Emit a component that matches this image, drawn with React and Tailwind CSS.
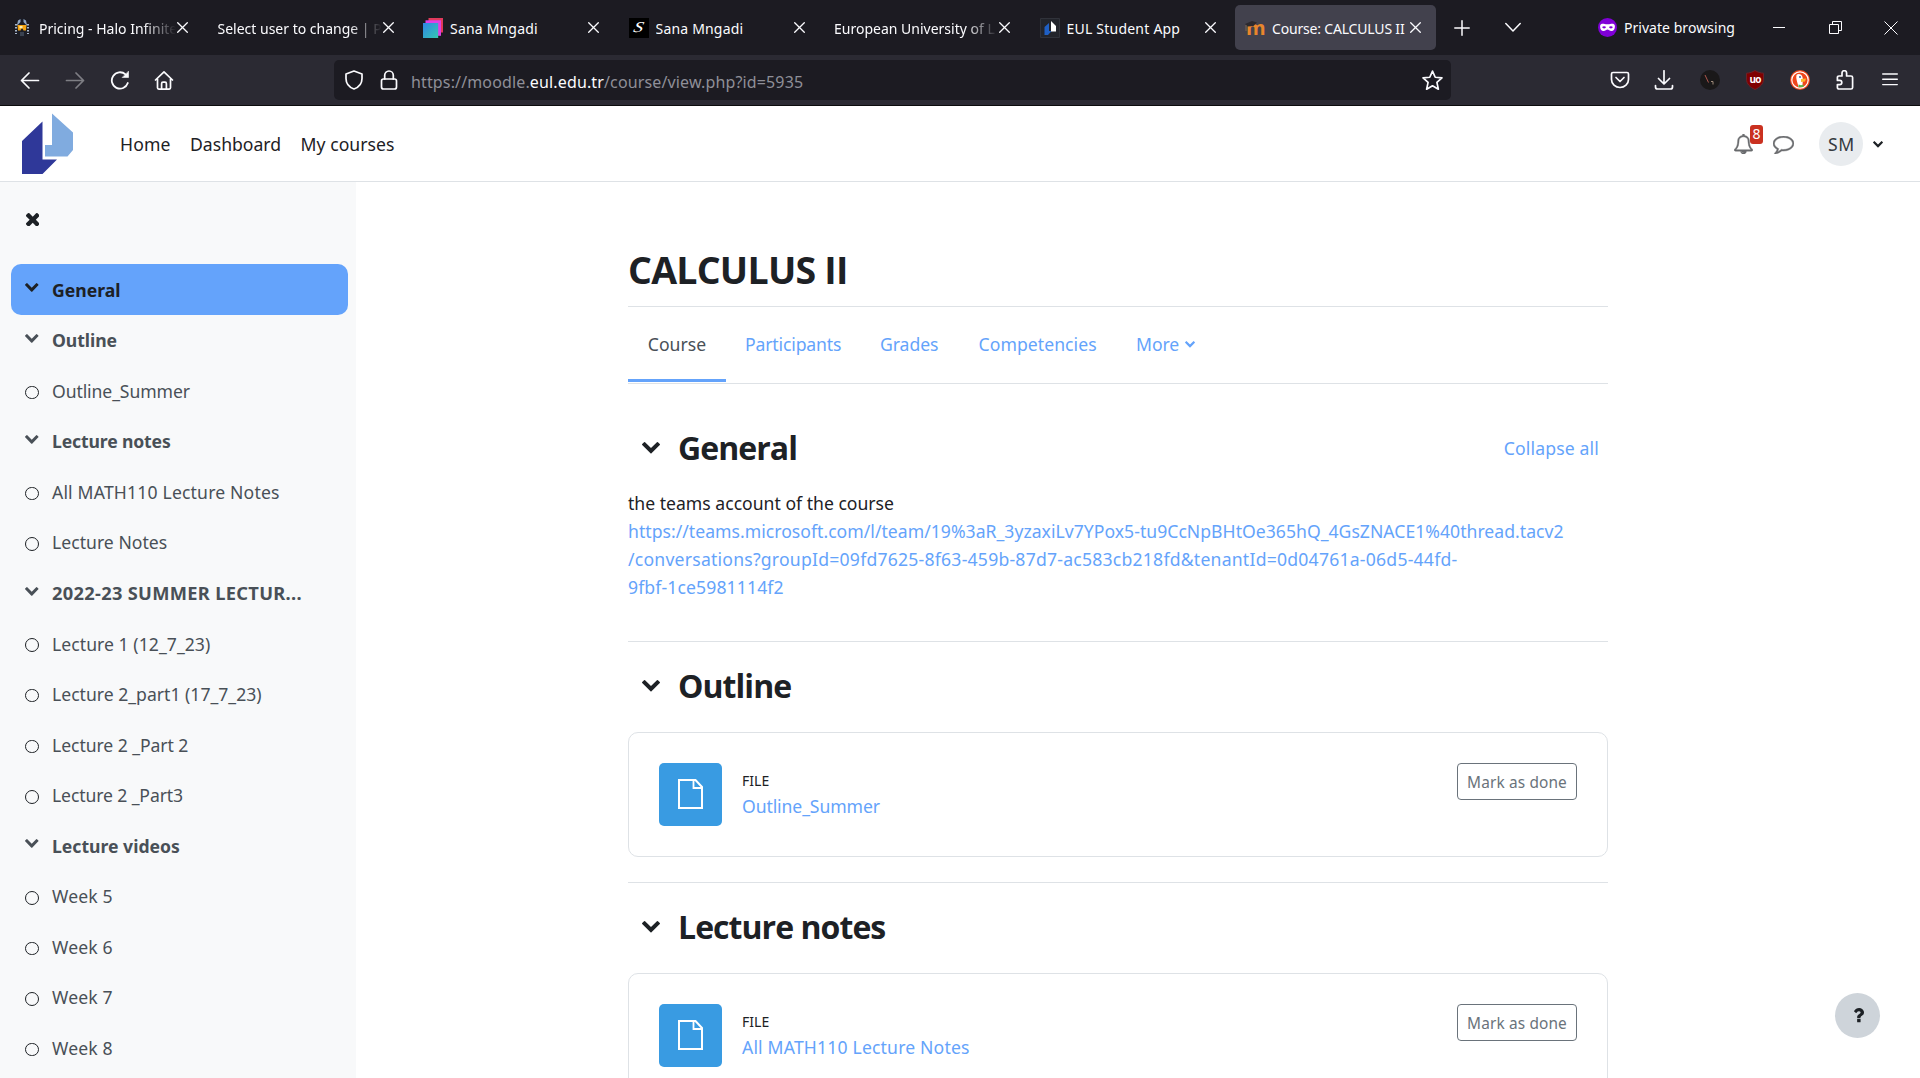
import React from 'react';

const FADE =
  '[mask-image:linear-gradient(to_right,black_calc(100%-34px),transparent_calc(100%-1px))]';

function Glyph({ box, d, className, stroke = 0 }) {
  return (
    <svg viewBox={box} className={className} fill="currentColor" stroke="currentColor" strokeWidth={stroke} preserveAspectRatio="none">
      <path d={d} />
    </svg>
  );
}

function Chevron({ className }) {
  return (
    <Glyph
      box="90 532 1612 1036"
      className={className}
      d="M1683 808l-742 741q-19 19-45 19t-45-19l-742-741q-19-19-19-45.5t19-45.5l166-165q19-19 45-19t45 19l531 531 531-531q19-19 45-19t45 19l166 165q19 19 19 45.5t-19 45.5z"
    />
  );
}

function Line({ box = '0 0 20 20', className = 'size-5', width = 1.7, children }) {
  return (
    <svg
      viewBox={box}
      className={className}
      fill="none"
      stroke="currentColor"
      strokeWidth={width}
      strokeLinecap="round"
      strokeLinejoin="round"
    >
      {children}
    </svg>
  );
}

/* ---------- favicons ---------- */

const HaloIcon = () => (
  <svg viewBox="0 0 20 20" className="size-5">
    <path d="M6 3 L8 .5 H12 L14 3 L16.500 9 L15 16 L12 19.500 H8 L5 16 L3.500 9 Z" fill="#1b1d26" />
    <path d="M6 2.500l2.500-1.500v3L4.800 8z M14 2.500l-2.500-1.500v3l3.700 4z" fill="#8fa6c4" />
    <path d="M4 6v10M16 6v10" stroke="#b9c9de" strokeWidth="1.800" strokeDasharray="1.600 1.400" />
    <path d="M5.500 7h9l-.5 5.500h-2.500l-1-2h-1l-1 2H6z" fill="#f5a411" />
    <path d="M7.500 8h3v2.300h-3z" fill="#fff0b0" />
    <path d="M8 14h4v4H8z" fill="#3a4250" />
  </svg>
);

const LayersIcon = () => (
  <svg viewBox="0 0 20 20" className="size-5">
    <defs>
      <linearGradient id="teal" x1="0" y1="0" x2="1" y2="1">
        <stop offset="0" stopColor="#2f86e8" />
        <stop offset="1" stopColor="#35c7b0" />
      </linearGradient>
    </defs>
    <path d="M5.500 0H20v14.500H5.500z" fill="#e03a5c" />
    <path d="M2.500 2.300H18v15.500H2.500z" fill="#e03fe6" />
    <path d="M0 5h15.200v15H0z" fill="url(#teal)" />
  </svg>
);

const SIcon = () => (
  <div className="flex size-5 items-center justify-center bg-black font-['Liberation_Serif',serif] text-[15px] leading-none text-white">
    <span className="-skew-x-12 scale-x-125 italic">S</span>
  </div>
);

const EulIcon = () => (
  <svg viewBox="0 0 20 20" className="size-5">
    <path d="M.5.5h19v19H.5z" fill="#22242b" stroke="#30323a" />
    <path d="M4.500 9L9 5v8h2.500L8 17H4.500z" fill="#1f5fc4" />
    <path d="M11 3l5 5v5.500h-5z" fill="#fff" />
  </svg>
);

const MoodleIcon = () => (
  <div className="relative size-5">
    <span className="absolute -bottom-[2px] left-[1px] font-['Open_Sans',sans-serif] text-[20px] leading-[24px] font-bold text-[#e8862c]">
      m
    </span>
    <svg viewBox="0 0 20 20" className="absolute inset-0 size-5">
      <path d="M0 6l7-3 5 1.500-3.500 3.500L2.500 8.500z" fill="#2c292e" />
      <path d="M1 7v6" stroke="#7d6454" strokeWidth="1" />
    </svg>
  </div>
);

/* ---------- browser chrome ---------- */

const TABS = [
  { icon: <HaloIcon />, title: 'Pricing - Halo Infinite', fade: true },
  { title: 'Select user to change | P', fade: true },
  { icon: <LayersIcon />, title: 'Sana Mngadi', track: 'tracking-[0.19px]' },
  { icon: <SIcon />, title: 'Sana Mngadi', track: 'tracking-[0.19px]' },
  { title: 'European University of L', fade: true },
  { icon: <EulIcon />, title: 'EUL Student App', track: 'tracking-[0.22px]' },
  { icon: <MoodleIcon />, title: 'Course: CALCULUS II', track: 'tracking-[-0.18px]', active: true },
];

function TabX() {
  return (
    <Line box="0 0 11 11" className="size-[11px] shrink-0" width={1.3}>
      <path d="M.7.7l9.600 9.600M10.300.7L.7 10.300" />
    </Line>
  );
}

function Tab({ icon, title, fade, active, track = '' }) {
  return (
    <div
      className={`flex h-[45px] w-[201.250px] shrink-0 items-center rounded-[5px] pl-[10px] pr-[15px] ${active ? 'bg-[#42414d]' : ''}`}
    >
      {icon && <div className="mr-[7px] shrink-0">{icon}</div>}
      <span
        className={`mt-[2px] block min-w-0 flex-1 overflow-hidden text-sm leading-5 whitespace-nowrap ${track} ${fade ? FADE : ''}`}
      >
        {title}
      </span>
      <TabX />
    </div>
  );
}

function TabStrip() {
  return (
    <div className="flex h-[55px] items-center bg-[#1c1b22] pl-[2px] text-[#fbfbfe]">
      <div className="flex shrink-0 gap-[4.250px]">
        {TABS.map((tab, i) => (
          <Tab key={i} {...tab} />
        ))}
      </div>
      <Line box="0 0 16 16" className="ml-[18px] size-4 shrink-0" width={1.5}>
        <path d="M8 .8v14.400M.8 8h14.400" />
      </Line>
      <Line box="0 0 16 16" className="ml-[35px] size-4 shrink-0" width={1.500}>
        <path d="M.8 3.500L8 11l7.200-7.500" />
      </Line>
      <div className="ml-auto flex items-center pr-[22px]">
        <svg viewBox="0 0 20 20" className="size-[19px]">
          <circle cx="10" cy="10" r="10" fill="#8000d7" />
          <path
            d="M2.200 8.600C2.200 6 5 5.800 7 6.300c1.500.5 4.500.5 6 0 2-.5 4.800-.3 4.800 2.300 0 3-1.300 5.200-3.600 5.200-2 0-3-1.600-4.200-1.600s-2.200 1.600-4.200 1.600c-2.300 0-3.600-2.200-3.600-5.200z"
            fill="#fff"
          />
          <ellipse cx="6.400" cy="9.800" rx="1.900" ry="1.200" fill="#8000d7" />
          <ellipse cx="13.600" cy="9.800" rx="1.900" ry="1.200" fill="#8000d7" />
        </svg>
        <span className="ml-[7px] text-sm tracking-[0.05px] whitespace-nowrap">Private browsing</span>
        <div className="ml-[38px] h-px w-3 bg-current" />
        <svg viewBox="0 0 13 13" className="ml-[44px] size-[13px]" fill="none" stroke="currentColor">
          <path d="M.5 3.500h9v9h-9zM3.500 3.500v-3h9v9h-3" />
        </svg>
        <svg viewBox="0 0 14 14" className="ml-[42px] size-[14px]" fill="none" stroke="currentColor">
          <path d="M.5.5l13 13M13.500.5l-13 13" />
        </svg>
      </div>
    </div>
  );
}

function Toolbar() {
  return (
    <div className="flex h-[51px] items-center border-b border-[#0c0c0d] bg-[#2b2a33] text-[#fbfbfe]">
      <div className="flex w-[334px] shrink-0 items-center gap-[25px] pl-5">
        <Line>
          <path d="M18.500 10.500H1.500M9 3L1.500 10.500 9 18" />
        </Line>
        <Line className="size-5 opacity-40">
          <path d="M1.500 10.500h17M11 3l7.500 7.500L11 18" />
        </Line>
        <Line width={1.800}>
          <path d="M17.800 13A8.200 8.200 0 1 1 15.500 4.400" />
          <path d="M18.500 1.500v6h-6z" fill="currentColor" strokeWidth=".6" />
        </Line>
        <Line className="-ml-px size-5" width={1.700}>
          <path d="M1.500 10L10 1.800l8.500 8.200M3.500 9v8.800c0 .8.5 1.300 1.300 1.300h10.400c.8 0 1.300-.5 1.300-1.300V9" />
          <path d="M7.600 18.800v-5c0-1 .6-1.600 1.400-1.600h2c.8 0 1.400.6 1.400 1.600v5" />
        </Line>
      </div>
      <div className="flex h-10 w-[1117px] shrink-0 items-center rounded-[5px] bg-[#1c1b22] pr-[8px] pl-[10px]">
        <Line width={1.700}>
          <path d="M10 1L18 4v4.500c0 4.500-3 8.700-8 10.500-5-1.800-8-6-8-10.500V4z" />
        </Line>
        <Line className="ml-[15px] size-5" width={1.700}>
          <rect x="2.500" y="9" width="15" height="10" rx="2" />
          <path d="M5.700 9V5.300a4.300 4.300 0 0 1 8.600 0V9" />
        </Line>
        <span className="mt-[3px] ml-[12px] text-base tracking-[0.14px] whitespace-nowrap text-[#8f8f98]">
          https://moodle.<span className="text-[#fbfbfe]">eul.edu.tr</span>/course/view.php?id=5935
        </span>
        <Line className="ml-auto size-[21px]" width={1.600}>
          <path d="M10 1l2.600 5.900 6.400.6-4.800 4.300 1.400 6.500L10 15l-5.600 3.300 1.400-6.500L1 7.500l6.400-.6z" />
        </Line>
      </div>
      <div className="ml-auto flex items-center gap-[25px] pr-[20px]">
        <Line width={1.700}>
          <path d="M3 2.500h14c.9 0 1.500.6 1.500 1.500v5.500a8.500 8 0 0 1-17 0V4c0-.9.6-1.500 1.500-1.500z" />
          <path d="M6 7.500l4 4 4-4" />
        </Line>
        <Line className="-ml-px mr-px size-5" width={1.700}>
          <path d="M10 .8v13M4.500 8.500L10 14l5.500-5.500M1.500 15.500V17c0 1.200.8 2 2 2h13c1.200 0 2-.8 2-2v-1.500" />
        </Line>
        <svg viewBox="0 0 20 20" className="size-5">
          <circle cx="10" cy="10" r="10" fill="#1a1819" />
          <path d="M5 5l3.500 7.500" stroke="#b0574e" strokeWidth="1" />
          <path d="M11 11.500h2v3" stroke="#a08c7c" strokeWidth="1" fill="none" />
        </svg>
        <div className="relative size-5">
          <svg viewBox="0 0 20 20" className="size-5">
            <path
              d="M10 .5c2.500 1.700 5.500 2.500 8.500 2.700V9c0 5-3.500 8.300-8.500 10.500C5 17.300 1.500 14 1.500 9V3.200C4.500 3 7.500 2.200 10 .5z"
              fill="#800000"
              stroke="#6b2229"
            />
          </svg>
          <span className="absolute inset-x-0 top-[3.500px] text-center font-['Open_Sans',sans-serif] text-[10px] leading-[10px] font-bold tracking-[-0.8px] text-white">
            uo
          </span>
        </div>
        <svg viewBox="0 0 20 20" className="size-5">
          <circle cx="10" cy="10" r="10" fill="#f0471c" />
          <circle cx="10" cy="10" r="8.200" fill="none" stroke="#fff" strokeWidth="1.200" />
          <path d="M6.500 5c1.500-2 6-1.300 6.300 3.500l-.3 8c-1.500.8-3 .8-4 .3C7.500 12.500 5.500 8.500 6.500 5z" fill="#fff" />
          <path d="M11 9l5-.5-1 3-4 .4z" fill="#fdb92e" />
          <path d="M8.500 14.500l2.500.8 2.500-.8v2.500l-5 .3z" fill="#5bb545" />
          <circle cx="10" cy="7" r=".9" fill="#2d4f8e" />
        </svg>
        <Line width={1.700}>
          <path d="M7 6V3a2.300 2.300 0 0 1 4.600 0v3H16c1 0 1.600.6 1.600 1.600v9.800c0 1-.6 1.600-1.600 1.600H4c-1 0-1.600-.6-1.600-1.600V14.600h2.300a2.100 2.100 0 0 0 0-4.200H2.400V7.600C2.400 6.600 3 6 4 6z" />
        </Line>
        <Line className="size-5" width={1.400}>
          <path d="M2.700 4h14.600M2.700 9.300h14.600M2.700 14.600h14.600" />
        </Line>
      </div>
    </div>
  );
}

/* ---------- site header ---------- */

function SiteHeader() {
  return (
    <header className="flex h-[76px] items-center border-b border-[#dee2e6] bg-white text-[#1d2125]">
      <svg viewBox="0 0 52 62" className="ml-[22px] h-[62px] w-[52px] shrink-0">
        <path d="M0 28L20.500 8.500V46.500H35L20.500 61H0z" fill="#2f3899" />
        <path d="M30 .5L51 19.500v17.500l-5.500 6.500H23V32h7z" fill="#80abdf" />
      </svg>
      <nav className="mt-[2px] ml-[46px] flex text-[17.600px] whitespace-nowrap">
        <span className="w-[70px] tracking-[0.150px]">Home</span>
        <span className="w-[110.500px]">Dashboard</span>
        <span className="tracking-[0.050px]">My courses</span>
      </nav>
      <div className="ml-auto flex items-center pr-[37px]">
        <div className="relative mr-[20px] text-[#6a6b6e]">
          <Glyph
            box="64 0 1664 1792"
            className="h-[20px] w-[19px]"
            stroke={40}
            d="M912 1696q0-16-16-16-59 0-101.500-42.500t-42.500-101.500q0-16-16-16t-16 16q0 73 51.500 124.500t124.500 51.500q16 0 16-16zm-666-288h1300q-266-300-266-832 0-51-24-105t-69-103-121.500-80.500-169.500-31.500-169.500 31.500-121.500 80.500-69 103-24 105q0 532-266 832zm1482 0q0 52-38 90t-90 38h-448q0 106-75 181t-181 75-181-75-75-181h-448q-52 0-90-38t-38-90q50-42 91-88t85-119.500 74.500-158.500 50-206 19.500-260q0-152 117-282.500t307-158.500q-8-19-8-39 0-40 28-68t68-28 68 28 28 68q0 20-8 39 190 28 307 158.500t117 282.500q0 139 19.500 260t50 206 74.500 158.500 85 119.500 91 88z"
          />
          <span className="absolute -top-[9px] left-[16px] flex h-[19px] w-[13px] items-center justify-center rounded-[3px] bg-[#ca3120] text-sm leading-none text-white">
            8
          </span>
        </div>
        <Glyph
          box="0 256 1792 1536"
          className="mt-[3px] mr-[25px] h-[18px] w-[21px] text-[#6a6b6e]"
          stroke={40}
          d="M896 384q-204 0-381.500 69.500t-282 187.500-104.500 255q0 112 71.500 213.500t201.500 175.500l87 50-27 96q-24 91-70 172 152-63 275-171l43-38 57 6q69 8 130 8 204 0 381.500-69.500t282-187.500 104.500-255-104.500-255-282-187.500-381.500-69.500zm896 512q0 174-120 321.500t-326 233-450 85.500q-70 0-145-8-198 175-460 242-49 14-114 22h-5q-15 0-27-10.500t-16-27.500v-1q-3-4-.5-12t2-10 4.500-9.500l6-9 7-8.500 8-9q7-8 31-34.500t34.500-38 31-39.500 32.500-51 27-59 26-76q-157-89-247.500-220t-90.500-281q0-130 71-248.500t191-204.500 286-136.500 348-50.500 348 50.500 286 136.500 191 204.500 71 248.500z"
        />
        <div className="flex size-11 items-center justify-center rounded-full bg-[#e9ecef] pt-[2px] pl-px text-[17.600px] tracking-[0.800px] text-[#343a40]">
          SM
        </div>
        <Chevron className="mt-[2px] ml-[10px] h-[6.500px] w-[10px] text-[#1d2125]" />
      </div>
    </header>
  );
}

/* ---------- course index ---------- */

const INDEX = [
  { title: 'General', section: true, active: true },
  { title: 'Outline', section: true, track: 'tracking-[-0.070px]' },
  { title: 'Outline_Summer', track: 'tracking-[-0.100px]' },
  { title: 'Lecture notes', section: true, track: 'tracking-[-0.140px]' },
  { title: 'All MATH110 Lecture Notes', track: 'tracking-[0.170px]' },
  { title: 'Lecture Notes', track: 'tracking-[0.020px]' },
  { title: '2022-23 SUMMER LECTUR...', section: true, track: 'text-[18.300px] tracking-[0.300px]' },
  { title: 'Lecture 1 (12_7_23)', track: 'tracking-[0.050px]' },
  { title: 'Lecture 2_part1 (17_7_23)' },
  { title: 'Lecture 2 _Part 2', track: 'tracking-[-0.070px]' },
  { title: 'Lecture 2 _Part3', track: 'tracking-[-0.120px]' },
  { title: 'Lecture videos', section: true },
  { title: 'Week 5', track: 'tracking-[0.130px]' },
  { title: 'Week 6', track: 'tracking-[0.130px]' },
  { title: 'Week 7', track: 'tracking-[0.130px]' },
  { title: 'Week 8', track: 'tracking-[0.130px]' },
];

function IndexRow({ title, section, active, track = '' }) {
  return (
    <li
      className={`flex h-[50.550px] items-center rounded-[10px] pt-[1.200px] pl-[14.500px] text-[17.600px] whitespace-nowrap ${active ? 'bg-[#64a3fb] text-[#1d2125]' : 'text-[#495057]'} ${section ? 'font-bold' : ''}`}
    >
      {section ? (
        <Chevron className="-ml-[0.500px] mb-[4px] h-[8.800px] w-[13.500px]" />
      ) : (
        <span className="-ml-[0.500px] mt-[3px] size-[13.500px] rounded-full border-[1.300px] border-[#1d2125]" />
      )}
      <span className={`ml-[13.500px] ${track}`}>{title}</span>
    </li>
  );
}

function CourseIndex() {
  return (
    <aside className="w-[356px] shrink-0 overflow-hidden bg-[#f8f9fa] pr-2 pl-[11px]">
      <div className="flex h-[82px] items-center pb-[7px] pl-[14.500px] text-[#1d2125]">
        <Glyph
          box="302 366 1188 1188"
          className="size-[13.500px]"
          d="M1490 1322q0 40-28 68l-136 136q-28 28-68 28t-68-28l-294-294-294 294q-28 28-68 28t-68-28l-136-136q-28-28-28-68t28-68l294-294-294-294q-28-28-28-68t28-68l136-136q28-28 68-28t68 28l294 294 294-294q28-28 68-28t68 28l136 136q28 28 28 68t-28 68l-294 294 294 294q28 28 28 68z"
        />
      </div>
      <ul>
        {INDEX.map((row) => (
          <IndexRow key={row.title} {...row} />
        ))}
      </ul>
    </aside>
  );
}

/* ---------- course content ---------- */

function SectionHeading({ title, children }) {
  return (
    <div className="flex h-[44px] items-center pr-[9px] pl-[14px]">
      <Chevron className="h-[11.500px] w-[18px] text-[#1d2125]" />
      <h2 className="ml-[18px] font-['Open_Sans',sans-serif] text-[32px] leading-[44px] font-bold tracking-[-0.950px]">
        {title}
      </h2>
      {children}
    </div>
  );
}

function FileCard({ title, track }) {
  return (
    <div className="flex h-[125px] items-start rounded-[10px] border border-[#dee2e6] pt-[30px] pr-[30px] pl-[30px]">
      <div className="flex size-[63px] items-center justify-center rounded-[5px] bg-[#399be2]">
        <svg viewBox="0 0 25 30" className="mb-px h-[30px] w-[25px]" fill="none" stroke="#fff">
          <path d="M1 1h16.500L24 8v21H1z" strokeWidth="2" />
          <path d="M15.500 1v8H24" strokeWidth="1.800" />
        </svg>
      </div>
      <div className="mt-[8px] ml-[20px]">
        <div className="text-sm leading-5 tracking-[0.050px]">FILE</div>
        <div className={`mt-[1px] text-[17.600px] leading-7 text-[#64a3fb] ${track}`}>{title}</div>
      </div>
      <button className="ml-auto h-[37px] w-[120px] rounded-[4px] border border-[#6a737b] pt-[2px] text-[15.400px] tracking-[0.140px] whitespace-nowrap text-[#6a737b]">
        Mark as done
      </button>
    </div>
  );
}

function CourseMain() {
  return (
    <main className="ml-[272px] w-[980px] shrink-0 text-[17.600px] text-[#1d2125]">
      <div className="flex h-[124px] items-center pt-[51px]">
        <h1 className="font-['Open_Sans',sans-serif] text-[37.500px] leading-[48px] font-bold tracking-[-0.750px]">
          CALCULUS II
        </h1>
      </div>
      <nav className="flex h-[78px] border-y border-[#dee2e6] pb-px leading-[75px] text-[#64a3fb]">
        <span className="w-[98px] border-b-3 border-[#64a3fb] text-center text-[#495057]">Course</span>
        <span className="ml-[19px] w-[135px] tracking-[-0.140px]">Participants</span>
        <span className="w-[98.500px] tracking-[-0.050px]">Grades</span>
        <span className="w-[157.500px] tracking-[0.060px]">Competencies</span>
        <span className="tracking-[-0.050px]">More</span>
        <Chevron className="mt-[34px] ml-[6px] h-[6.500px] w-[10px]" />
      </nav>

      <section className="h-[257px] pt-[42px]">
        <SectionHeading title="General">
          <a className="ml-auto tracking-[0.150px] text-[#64a3fb]">Collapse all</a>
        </SectionHeading>
        <p className="mt-[19px] leading-[28.100px] whitespace-nowrap">
          the teams account of the course
          <a className="block tracking-[0.025px] text-[#64a3fb]">
            https://teams.microsoft.com/l/team/19%3aR_3yzaxiLv7YPox5-tu9CcNpBHtOe365hQ_4GsZNACE1%40thread.tacv2
            <br />
            <span className="tracking-[0.227px]">
              /conversations?groupId=09fd7625-8f63-459b-87d7-ac583cb218fd&amp;tenantId=0d04761a-06d5-44fd-
            </span>
            <br />
            <span className="tracking-[0.120px]">9fbf-1ce5981114f2</span>
          </a>
        </p>
      </section>

      <section className="h-[241px] border-t border-[#dee2e6] pt-[22px]">
        <SectionHeading title="Outline" />
        <div className="mt-[24px]">
          <FileCard title="Outline_Summer" track="tracking-[-0.100px]" />
        </div>
      </section>

      <section className="h-[241px] border-t border-[#dee2e6] pt-[22px]">
        <SectionHeading title="Lecture notes" />
        <div className="mt-[24px]">
          <FileCard title="All MATH110 Lecture Notes" track="tracking-[0.170px]" />
        </div>
      </section>
    </main>
  );
}

export default function App() {
  return (
    <div className="relative flex h-[1078px] w-[1920px] flex-col overflow-hidden bg-white font-['Noto_Sans',sans-serif]">
      <TabStrip />
      <Toolbar />
      <SiteHeader />
      <div className="flex min-h-0 flex-1 overflow-hidden">
        <CourseIndex />
        <CourseMain />
      </div>
      <button className="absolute right-10 bottom-10 flex size-[45px] items-center justify-center rounded-full bg-[#ced4da] text-[#1d2125]">
        <Glyph
          box="385 256 1019 1280"
          className="ml-px h-[14.300px] w-[11px]"
          d="M1088 1256v240q0 16-12 28t-28 12h-240q-16 0-28-12t-12-28v-240q0-16 12-28t28-12h240q16 0 28 12t12 28zm316-600q0 54-15.500 101t-35 76.500-55 59.500-57.500 43.500-61 35.500q-41 23-68.500 65t-27.500 67q0 17-12 32.500t-28 15.500h-240q-15 0-25.500-18.500t-10.500-37.500v-45q0-83 65-156.500t143-108.500q59-27 84-56t25-76q0-42-46.500-74t-107.500-32q-65 0-108 29-35 25-107 115-13 16-31 16-12 0-25-8l-164-125q-13-10-15.500-25t5.500-28q160-266 464-266 80 0 161 31t146 83 106 127.500 41 158.500z"
        />
      </button>
    </div>
  );
}
